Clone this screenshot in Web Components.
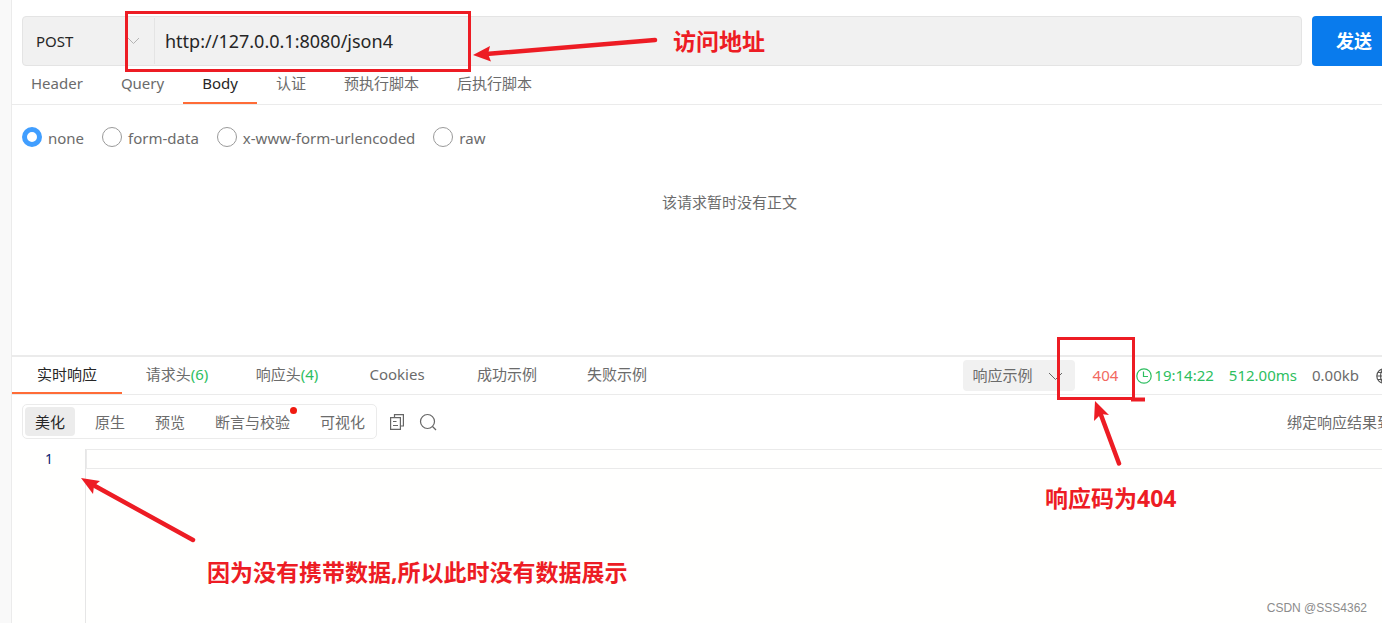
<!DOCTYPE html>
<html lang="zh-CN">
<head>
<meta charset="utf-8">
<title>API client</title>
<style>
  html, body { margin: 0; height: 100%; }
  body {
    overflow: hidden;
    background: #fff;
    color: #6b6b6b;
    font: 15px/20px "Noto Sans", "Noto Sans CJK SC", sans-serif;
    --line: #ebebeb;
    --ink: #262626;
    --accent: #ff6c37;
    --green: #2dbe60;
    --mark: #ed1c24;
  }
</style>
</head>
<body>
<api-client></api-client>
<script>
const define = (name, html, setup) => {
  const template = document.createElement('template');
  template.innerHTML = html;
  customElements.define(name, class extends HTMLElement {
    constructor() {
      super();
      this.attachShadow({ mode: 'open' }).append(template.content.cloneNode(true));
    }
    connectedCallback() { if (setup) setup(this, this.shadowRoot); }
  });
};

const reset = `*{box-sizing:border-box}
  button,select,input{font:inherit;color:inherit;margin:0;padding:0;border:0;background:none;border-radius:0;outline:0}`;

define('request-bar', `
<style>${reset}
  :host{display:flex;gap:10px;padding:16px 0 0 10px}
  .field{flex:1;display:flex;align-items:center;height:50px;border:1px solid #e4e4e4;border-radius:4px;background:#f1f1f1;color:var(--ink)}
  .method{position:relative;width:132px;height:46px;border-right:1px solid #e4e4e4;display:flex;align-items:center}
  select{appearance:none;width:100%;height:100%;padding-left:13px}
  svg{position:absolute;right:14px;top:19px;pointer-events:none}
  input{flex:1;min-width:0;height:100%;padding:0 10px;font-size:18px}
  button{height:50px;padding:0 10px 0 24px;border-radius:4px 0 0 4px;background:#097bed;color:#fff;font-size:18px;font-weight:700}
</style>
<div class="field">
  <div class="method">
    <select aria-label="请求方法"><option>POST</option><option>GET</option></select>
    <svg width="13" height="8" fill="none" stroke="#b3b3b3"><path d="M1 1l5.500 5.500L12 1"/></svg>
  </div>
  <input type="text" aria-label="请求地址" value="http://127.0.0.1:8080/json4">
</div>
<button type="button">发送</button>`);

define('tab-item', `
<style>${reset}
  :host{display:block}
  button{display:block;width:100%;height:100%;padding:0 19px 2px;white-space:nowrap;border-bottom:2px solid transparent}
  :host([fixed]) button{width:110px;padding:0 0 2px}
  :host([active]) button{color:var(--ink);border-color:var(--accent)}
  ::slotted(b){font-weight:400;color:var(--green)}
</style>
<button type="button" role="tab"><slot></slot></button>`,
(host, root) => root.querySelector('button').setAttribute('aria-selected', host.hasAttribute('active')));

define('tab-strip', `
<style>${reset}
  :host{display:flex;box-sizing:border-box;height:39px;border-bottom:1px solid var(--line)}
  nav{display:flex}
  .end{flex:1;display:flex;justify-content:flex-end}
</style>
<nav role="tablist"><slot></slot></nav><div class="end"><slot name="end"></slot></div>`);

define('body-types', `
<style>${reset}
  :host{display:flex;gap:18px;padding:20px 10px 0}
  label{display:flex;gap:6px;align-items:center}
  input{appearance:none;width:20px;height:20px;border:1px solid #9a9a9a;border-radius:50%;background:#fff}
  input:checked{border:5px solid #409eff}
  span{padding-top:3px}
</style>
<label><input type="radio" name="t" checked><span>none</span></label>
<label><input type="radio" name="t"><span>form-data</span></label>
<label><input type="radio" name="t"><span>x-www-form-urlencoded</span></label>
<label><input type="radio" name="t"><span>raw</span></label>`);

define('request-body', `
<style>${reset}
  :host{display:block;height:250px}
  p{margin:0;padding:44px 0 0 65px;text-align:center}
</style>
<body-types></body-types>
<p>该请求暂时没有正文</p>`);

define('response-status', `
<style>${reset}
  :host{display:flex;align-items:center;height:37px;white-space:nowrap}
  .pick{position:relative;width:112px;height:31px;border-radius:4px;background:#f1f1f1}
  select{appearance:none;width:100%;height:100%;padding:0 0 2px 10px}
  .pick svg{position:absolute;right:12px;top:12px;pointer-events:none}
  .text{padding-bottom:2px}
  .code{margin-left:18px;color:#f2695f}
  .time{display:flex;align-items:center;gap:2px;margin-left:18px}
  .green{color:var(--green)}
  .dur,.size{margin-left:15px}
  .net{margin-left:17px;width:6px;height:16px;overflow:hidden}
  .net svg,.time svg{display:block}
</style>
<div class="pick"><select aria-label="响应示例"><option>响应示例</option></select>
<svg width="15" height="9" fill="none" stroke="#666"><path d="M1 1l6.500 6.500L14 1"/></svg></div>
<span class="code text">404</span>
<span class="time green"><svg width="16" height="16" fill="none" stroke="#2dbe60" stroke-width="1.200"><circle cx="8" cy="8" r="7.200"/><path d="M7.500 3.500V8.500H12"/></svg><span class="text">19:14:22</span></span>
<span class="dur green text">512.00ms</span>
<span class="size text">0.00kb</span>
<span class="net"><svg width="16" height="16" fill="none" stroke="#555" stroke-width="1.200"><circle cx="8" cy="8" r="7.200"/><ellipse cx="8" cy="8" rx="3.400" ry="7.200"/><path d="M1 8h14M2 4.500h12M2 11.500h12M8 1v14"/></svg></span>`);

define('view-toolbar', `
<style>${reset}
  :host{display:flex;align-items:center;padding:9px 0 10px 10px}
  .seg{display:flex;gap:10px;height:35px;padding:2px 1px 2px 2px;border:1px solid var(--line);border-radius:5px}
  .seg button{position:relative;height:29px;padding:0 10px;border-radius:4px;white-space:nowrap}
  .seg .on{background:#ececec;color:var(--ink)}
  .dot::after{content:"";position:absolute;right:3px;top:0;width:7px;height:7px;border-radius:50%;background:#f01a10}
  .icon{display:block;width:18px;height:18px;margin-left:12px}
  .icon svg{display:block}
  .bind{margin-left:auto;width:95px;overflow:hidden;white-space:nowrap}
</style>
<div class="seg">
  <button type="button" class="on">美化</button><button type="button">原生</button><button type="button">预览</button><button type="button" class="dot">断言与校验</button><button type="button">可视化</button>
</div>
<button type="button" class="icon" aria-label="复制"><svg width="18" height="18" fill="none" stroke="#666" stroke-width="1.200"><path d="M5.500 4V1.600H14.400V13H12M1.600 4.600H8L11.400 4.600V16.400H1.600zM4 8.500H7.500M4 12.500H9"/></svg></button>
<button type="button" class="icon" aria-label="搜索"><svg width="18" height="18" fill="none" stroke="#666" stroke-width="1.200"><circle cx="8.500" cy="8.500" r="7"/><path d="M13.500 13.500L17 17"/></svg></button>
<div class="bind">绑定响应结果到</div>`);

define('code-editor', `
<style>${reset}
  :host{display:grid;grid-template-columns:73px 1fr;flex:1;min-height:0;background:#fffffe}
  .nums{padding-right:32px;text-align:right;color:#0b216f;font-size:14px}
  .code{border-left:1px solid #e6e6e6}
  .line{height:20px;border:1px solid #eaeaea;border-right:0}
</style>
<div class="nums">1</div>
<div class="code"><div class="line"></div></div>`);

define('response-pane', `
<style>${reset}
  :host{display:flex;flex-direction:column;flex:1;min-height:0;border-top:2px solid var(--line)}
  tab-strip{height:38px}
</style>
<tab-strip>
  <tab-item fixed active>实时响应</tab-item>
  <tab-item fixed>请求头<b>(6)</b></tab-item>
  <tab-item fixed>响应头<b>(4)</b></tab-item>
  <tab-item fixed>Cookies</tab-item>
  <tab-item fixed>成功示例</tab-item>
  <tab-item fixed>失败示例</tab-item>
  <response-status slot="end"></response-status>
</tab-strip>
<view-toolbar></view-toolbar>
<code-editor></code-editor>`);

/* Red callouts that lie over the client: frames, arrows and captions. */
define('callout-layer', `
<style>${reset}
  :host{position:absolute;inset:0;pointer-events:none;color:var(--mark);font-size:23px;line-height:30px;font-weight:700}
  svg{position:absolute;inset:0;width:100%;height:100%}
  span{position:absolute;white-space:nowrap}
  .url{left:673px;top:26px}
  .code{left:1045px;top:483px}
  .data{left:207px;top:557px}
  .sign{right:15px;bottom:5px;font:12px/20px "Liberation Sans",sans-serif;color:#8c8c8c}
</style>
<svg fill="none" stroke="#ed1c24" stroke-width="3">
  <path d="M126.500 12.500H469.500V70.500H126.500z"/>
  <path d="M1058.500 338.500H1133.500V398.500H1058.500z"/>
  <path d="M1131 399.500H1145" stroke-width="4"/>
  <g stroke-width="4.500" stroke-linecap="round">
    <path d="M655 40L486 54M1119 463.500L1101 415M193 540L95 486"/>
  </g>
  <g fill="#ed1c24" stroke="none">
    <path d="M473 55L490 46L488 54L491 61.500z"/>
    <path d="M1095 401L1109 415L1101 414L1094 421z"/>
    <path d="M81 478L100 481L94 486L93 494z"/>
  </g>
</svg>
<span class="url">访问地址</span>
<span class="code">响应码为404</span>
<span class="data">因为没有携带数据,所以此时没有数据展示</span>
<span class="sign">CSDN @SSS4362</span>`);

define('api-client', `
<style>${reset}
  :host{position:relative;display:flex;height:100%;overflow:hidden}
  aside{width:12px;flex:none;background:#f9f9f9;border-right:1px solid var(--line)}
  main{flex:1;min-width:0;display:flex;flex-direction:column}
</style>
<aside></aside>
<main>
  <request-bar></request-bar>
  <tab-strip>
    <tab-item>Header</tab-item><tab-item>Query</tab-item><tab-item active>Body</tab-item><tab-item>认证</tab-item><tab-item>预执行脚本</tab-item><tab-item>后执行脚本</tab-item>
  </tab-strip>
  <request-body></request-body>
  <response-pane></response-pane>
</main>
<callout-layer></callout-layer>`);
</script>
</body>
</html>
